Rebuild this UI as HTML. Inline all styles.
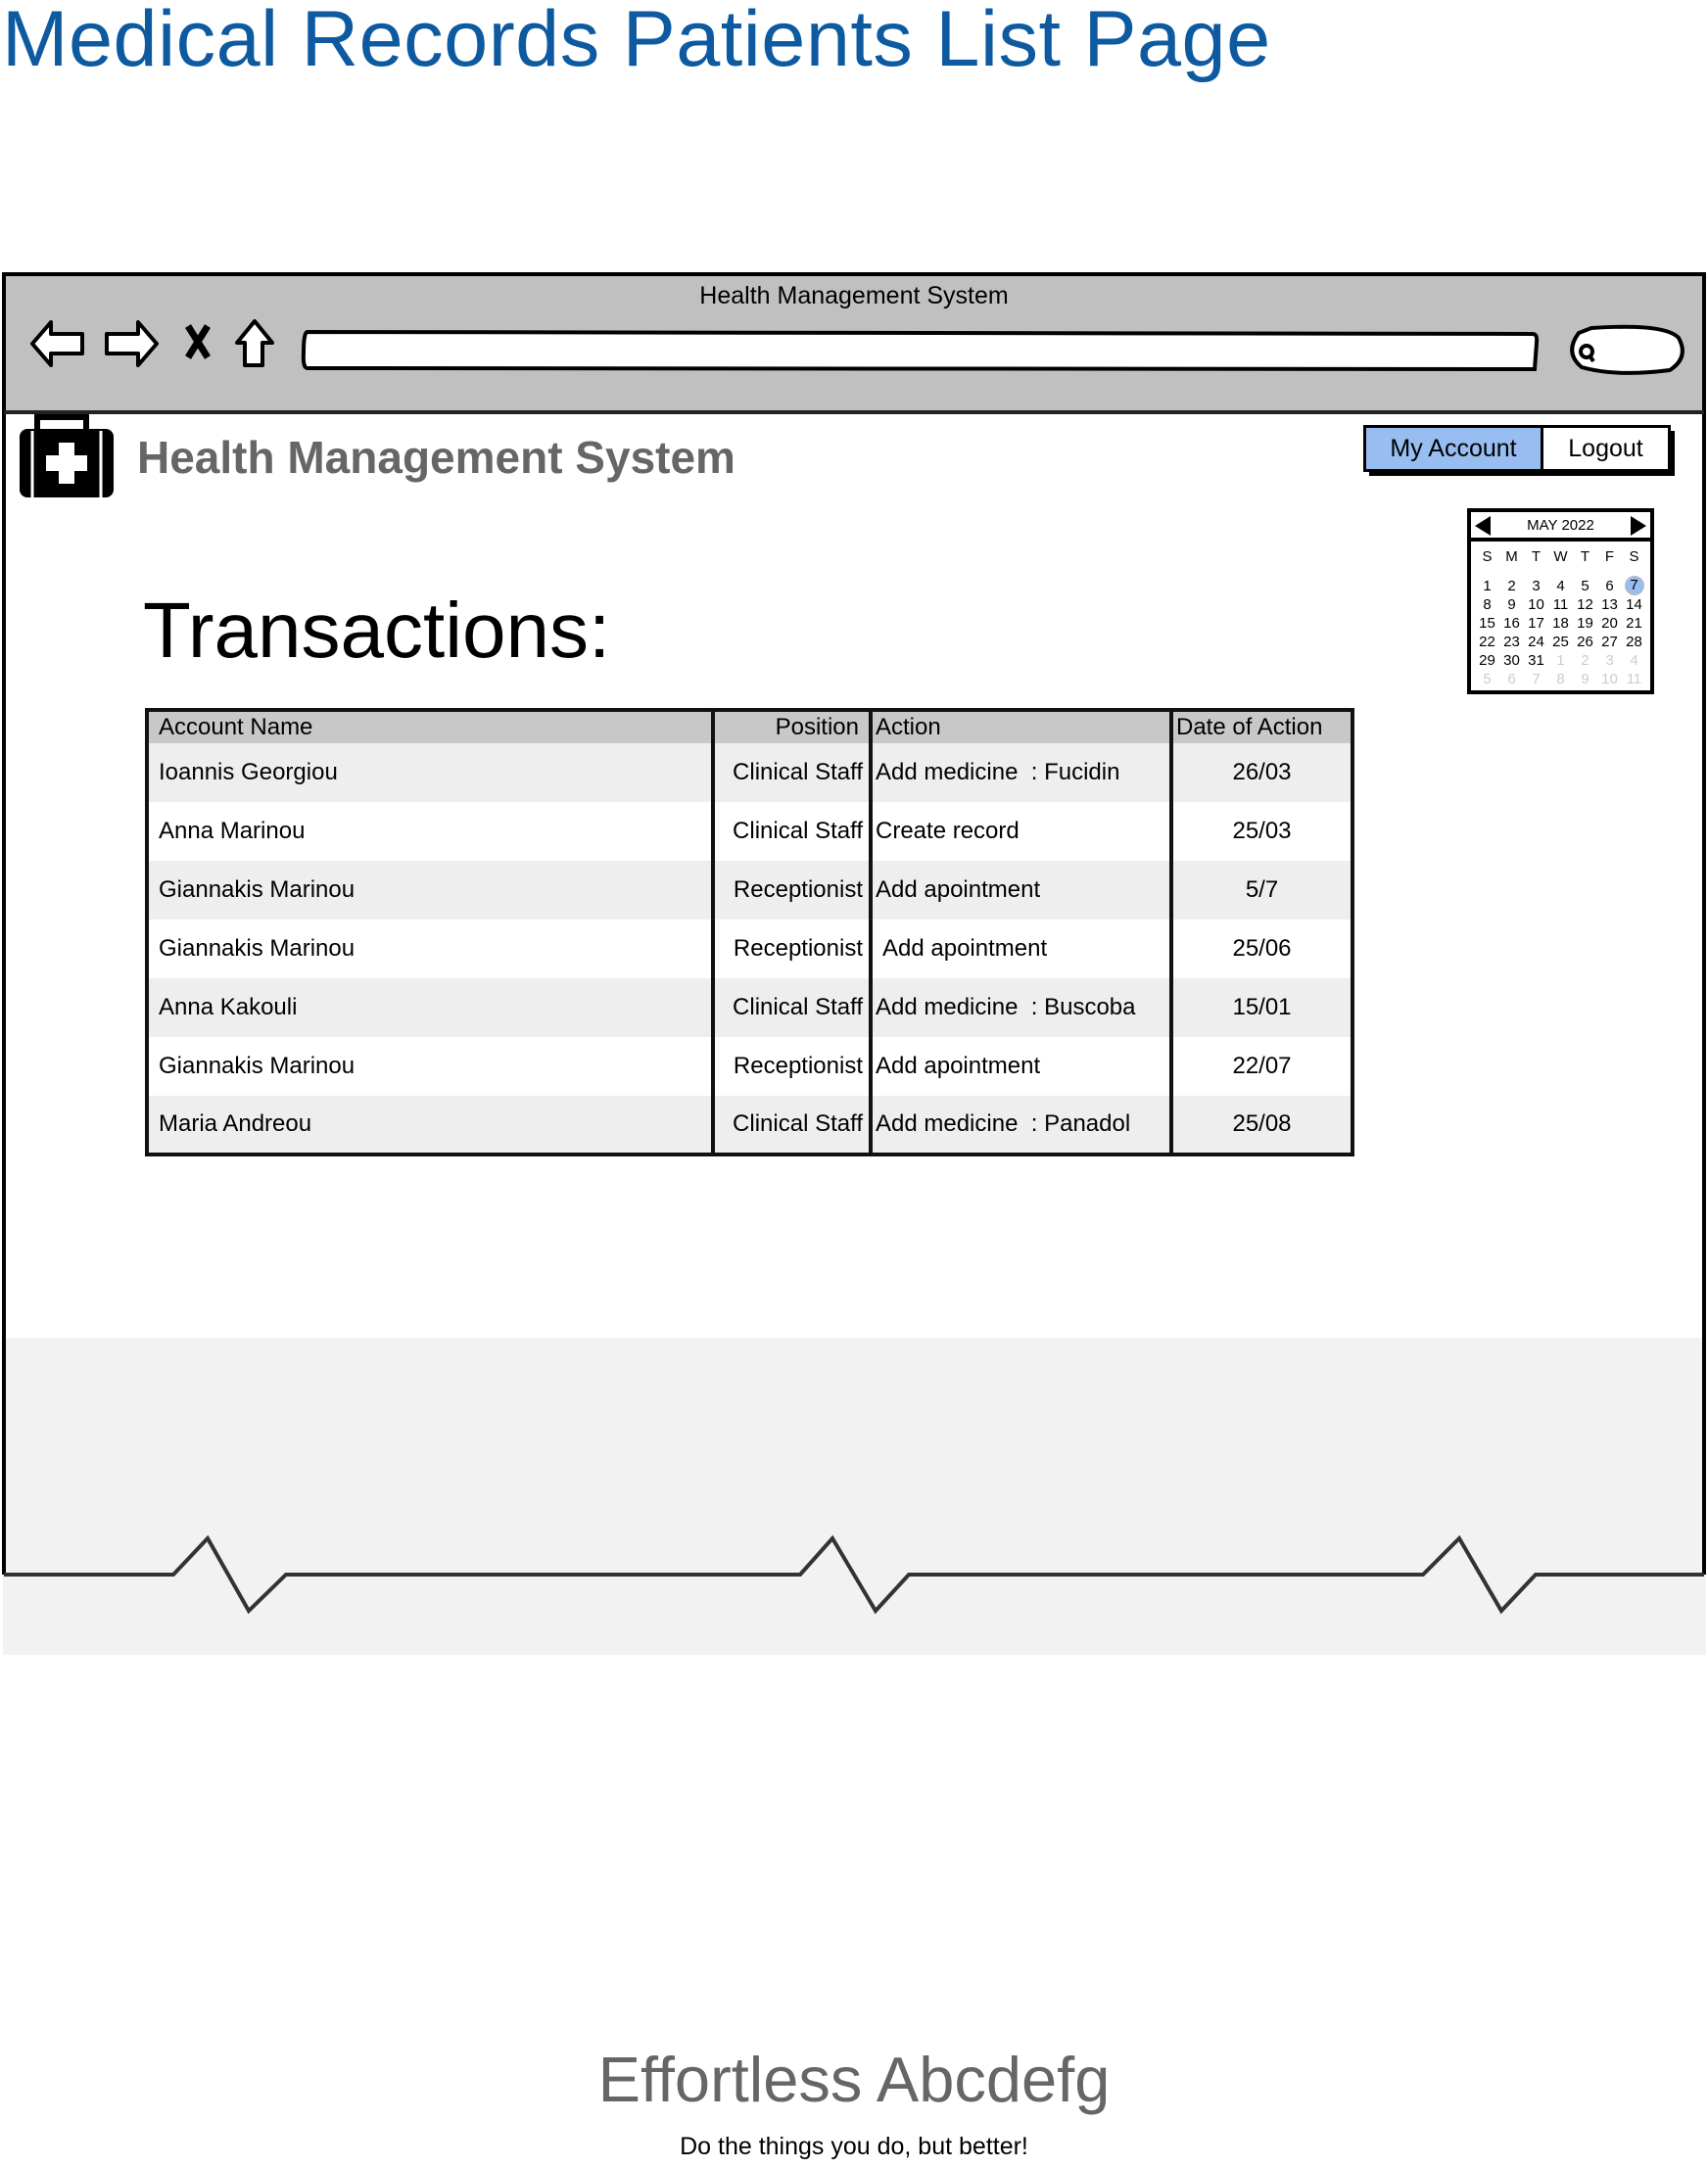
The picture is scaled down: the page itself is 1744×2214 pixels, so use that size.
<!DOCTYPE html>
<html><head><meta charset="utf-8"><style>
*{margin:0;padding:0;box-sizing:border-box}
body{width:1744px;height:2214px;background:#fff;position:relative;overflow:hidden;font-family:"Liberation Sans",sans-serif;color:#000}
.abs{position:absolute}
.title{left:2px;top:-6px;font-size:81px;color:#0d5aa0;white-space:nowrap;letter-spacing:0.5px}
table{border-collapse:collapse}
td{font-size:24px;height:60px;padding:0 10px;white-space:nowrap}
tr.h td{height:34px;background:#c8c8c8;font-size:24px}
tr.g td{background:#eee}
.cal td{padding:0;height:19px;line-height:19px;font-size:15px;text-align:center;width:25px}
</style></head><body>
<div class="abs title">Medical Records Patients List Page</div>

<div class="abs" style="left:3px;top:1366px;width:1739px;height:324px;background:#f2f2f2"></div>
<div class="abs" style="left:3px;top:278px;width:1739px;height:143px;background:#c0c0c0"></div>
<svg class="abs" style="left:0;top:0" width="1744" height="1700">
<path d="M4 1608 L4 280 L1740 280 L1740 1608" fill="none" stroke="#000" stroke-width="4"/>
<line x1="4" y1="421" x2="1740" y2="421" stroke="#222" stroke-width="4"/>
<path d="M4 1608 L177 1608 L212 1571 L254 1645 L292 1608 L817 1608 L850 1571 L894 1645 L928 1608 L1453 1608 L1490 1571 L1533 1645 L1568 1608 L1740 1608" fill="none" stroke="#333" stroke-width="4"/>
<path d="M33 351 L52 329 L52 341 L84 341 L84 361 L52 361 L52 373 Z" fill="#fff" stroke="#000" stroke-width="4" stroke-linejoin="round"/>
<path d="M160 351 L141 329 L141 341 L109 341 L109 361 L141 361 L141 373 Z" fill="#fff" stroke="#000" stroke-width="4" stroke-linejoin="round"/>
<path d="M192 333 L212 365 M212 333 L192 365" stroke="#000" stroke-width="7"/>
<path d="M260 328 L242 350 L250 350 L250 373 L268 373 L268 350 L278 350 Z" fill="#fff" stroke="#000" stroke-width="4" stroke-linejoin="round"/>
<path d="M314 339 L1565 341 Q1570 341 1569 350 L1567 377 L314 376 Q309 376 310 360 Q310 339 314 339 Z" fill="#fff" stroke="#000" stroke-width="4"/>
<path d="M1625 335 Q1700 330 1714 345 Q1725 365 1705 378 Q1650 385 1615 375 Q1597 360 1612 340 Z" fill="#fff" stroke="#000" stroke-width="4"/>
<circle cx="1620" cy="359" r="6" fill="none" stroke="#000" stroke-width="4"/><path d="M1623 363 L1627 369" stroke="#000" stroke-width="4"/>
<path d="M38 438 L38 426 L88 426 L88 438" fill="none" stroke="#000" stroke-width="6"/>
<rect x="20" y="438" width="96" height="70" rx="8" fill="#000"/>
<line x1="33" y1="440" x2="33" y2="508" stroke="#fff" stroke-width="3"/>
<line x1="103" y1="440" x2="103" y2="508" stroke="#fff" stroke-width="3"/>
<path d="M60 452 L76 452 L76 465 L89 465 L89 481 L76 481 L76 494 L60 494 L60 481 L47 481 L47 465 L60 465 Z" fill="#fff"/>
</svg>
<div class="abs" style="left:0;width:1744px;top:288px;text-align:center;font-size:25px">Health Management System</div>
<div class="abs" style="left:140px;top:440px;font-size:46px;font-weight:bold;color:#666">Health Management System</div>

<div class="abs" style="left:1398px;top:440px;width:312px;height:46px;background:#000"></div>
<div class="abs" style="left:1392px;top:434px;width:184px;height:48px;background:#97bdf1;border:3px solid #000;font-size:25px;text-align:center;line-height:42px">My Account</div>
<div class="abs" style="left:1576px;top:434px;width:130px;height:48px;background:#fff;border:3px solid #000;border-left:0;font-size:25px;text-align:center;line-height:42px">Logout</div>

<div class="abs" style="left:1498px;top:519px;width:191px;height:190px;border:4px solid #000;background:#fff;overflow:hidden">
 <div style="height:30px;border-bottom:4px solid #000;position:relative;text-align:center;font-size:15px;line-height:28px">MAY 2022
  <span class="abs" style="left:4px;top:4px;width:0;height:0;border-top:10px solid transparent;border-bottom:10px solid transparent;border-right:16px solid #000"></span>
  <span class="abs" style="right:4px;top:4px;width:0;height:0;border-top:10px solid transparent;border-bottom:10px solid transparent;border-left:16px solid #000"></span></div>
 <table class="cal" style="margin-left:4px;margin-top:6px">
 <tr><td>S</td><td>M</td><td>T</td><td>W</td><td>T</td><td>F</td><td>S</td></tr>
 <tr><td style="height:10px"></td></tr>
 <tr><td>1</td><td>2</td><td>3</td><td>4</td><td>5</td><td>6</td><td><span style="display:inline-block;width:20px;height:20px;line-height:18px;border-radius:50%;background:#97bdf1;border:1px solid #bbb">7</span></td></tr>
 <tr><td>8</td><td>9</td><td>10</td><td>11</td><td>12</td><td>13</td><td>14</td></tr>
 <tr><td>15</td><td>16</td><td>17</td><td>18</td><td>19</td><td>20</td><td>21</td></tr>
 <tr><td>22</td><td>23</td><td>24</td><td>25</td><td>26</td><td>27</td><td>28</td></tr>
 <tr><td>29</td><td>30</td><td>31</td><td style="color:#ccc">1</td><td style="color:#ccc">2</td><td style="color:#ccc">3</td><td style="color:#ccc">4</td></tr>
 <tr style="color:#ccc"><td>5</td><td>6</td><td>7</td><td>8</td><td>9</td><td>10</td><td>11</td></tr>
 </table>
</div>

<div class="abs" style="left:146px;top:598px;font-size:80px">Transactions:</div>

<table class="abs" style="left:148px;top:723px;width:1235px;border:4px solid #111">
<colgroup><col style="width:578px"><col style="width:161px"><col style="width:307px"><col></colgroup>
<tr class="h"><td>Account Name</td><td style="text-align:right;border-left:4px solid #111">Position</td><td style="border-left:4px solid #111;padding-left:3px">Action</td><td style="border-left:4px solid #111;padding-left:3px">Date of Action</td></tr>
<tr class="g"><td>Ioannis Georgiou</td><td style="border-left:4px solid #111;text-align:right;padding-right:6px">Clinical Staff</td><td style="border-left:4px solid #111;padding-left:3px">Add medicine&nbsp; : Fucidin</td><td style="border-left:4px solid #111;text-align:center">26/03</td></tr>
<tr><td>Anna Marinou</td><td style="border-left:4px solid #111;text-align:right;padding-right:6px">Clinical Staff</td><td style="border-left:4px solid #111;padding-left:3px">Create record</td><td style="border-left:4px solid #111;text-align:center">25/03</td></tr>
<tr class="g"><td>Giannakis Marinou</td><td style="border-left:4px solid #111;text-align:right;padding-right:6px">Receptionist</td><td style="border-left:4px solid #111;padding-left:3px">Add apointment</td><td style="border-left:4px solid #111;text-align:center">5/7</td></tr>
<tr><td>Giannakis Marinou</td><td style="border-left:4px solid #111;text-align:right;padding-right:6px">Receptionist</td><td style="border-left:4px solid #111;padding-left:10px">Add apointment</td><td style="border-left:4px solid #111;text-align:center">25/06</td></tr>
<tr class="g"><td>Anna Kakouli</td><td style="border-left:4px solid #111;text-align:right;padding-right:6px">Clinical Staff</td><td style="border-left:4px solid #111;padding-left:3px">Add medicine&nbsp; : Buscoba</td><td style="border-left:4px solid #111;text-align:center">15/01</td></tr>
<tr><td>Giannakis Marinou</td><td style="border-left:4px solid #111;text-align:right;padding-right:6px">Receptionist</td><td style="border-left:4px solid #111;padding-left:3px">Add apointment</td><td style="border-left:4px solid #111;text-align:center">22/07</td></tr>
<tr class="g"><td>Maria Andreou</td><td style="border-left:4px solid #111;text-align:right;padding-right:6px">Clinical Staff</td><td style="border-left:4px solid #111;padding-left:3px">Add medicine&nbsp; : Panadol</td><td style="border-left:4px solid #111;text-align:center">25/08</td></tr>
</table>

<div class="abs" style="left:0;width:1744px;top:2086px;text-align:center;font-size:65px;color:#666">Effortless Abcdefg</div>
<div class="abs" style="left:0;width:1744px;top:2178px;text-align:center;font-size:25px">Do the things you do, but better!</div>
</body></html>
